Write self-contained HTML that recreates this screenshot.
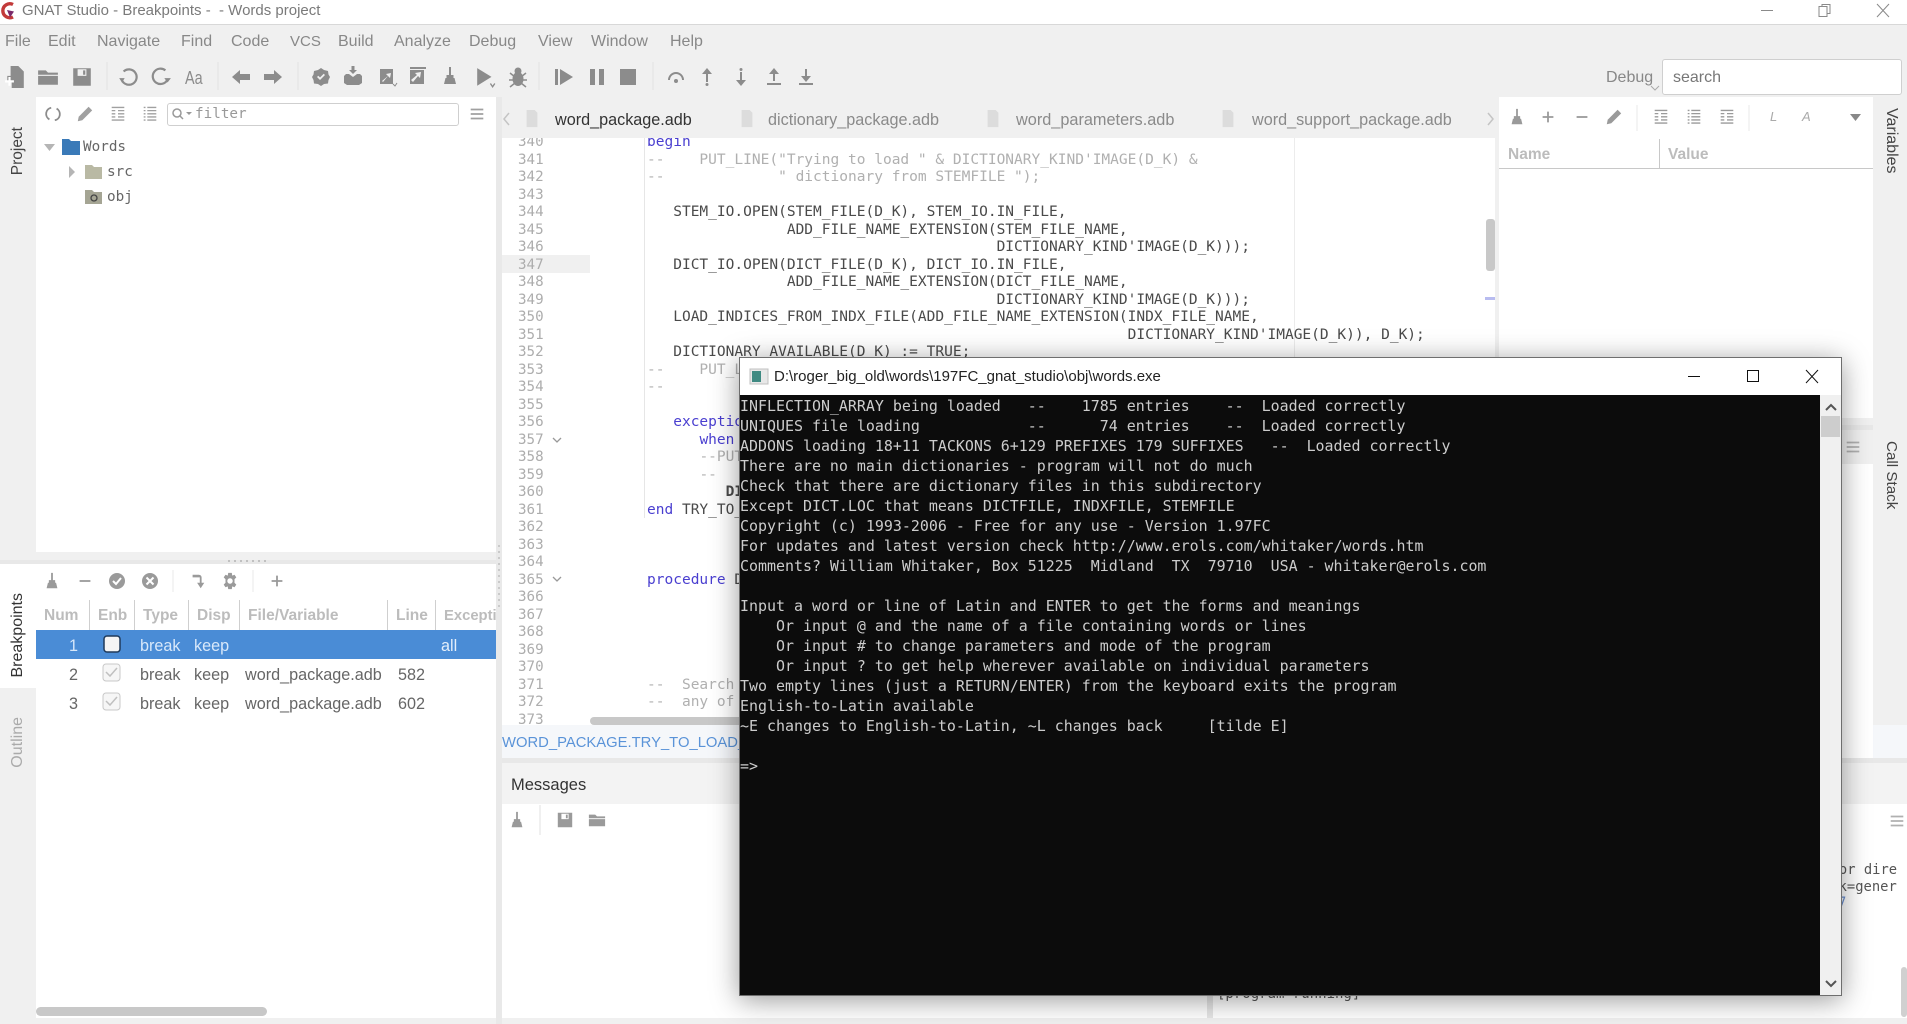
<!DOCTYPE html>
<html><head><meta charset="utf-8"><title>GNAT Studio</title>
<style>
html,body{margin:0;padding:0;width:1907px;height:1024px;overflow:hidden;background:#f0f0f0;font-family:"Liberation Sans",sans-serif}
.r{position:absolute}
.t{position:absolute;white-space:pre;font-size:16px;line-height:20px;color:#777}
.m{color:#888}
.h{font-weight:bold;color:#bcbcbc;font-size:15.5px}
.d{color:#666;font-size:16.2px}
.v{position:absolute;white-space:pre;font-size:16px;line-height:20px;writing-mode:vertical-rl}
.u{transform:rotate(180deg)}
pre{margin:0;position:absolute;font-family:"DejaVu Sans Mono",monospace;font-size:14.53px;line-height:17.5px;color:#4a4a4a}
.k{color:#4a3fd0}.c{color:#b0b0b0}
.mono{font-family:"DejaVu Sans Mono",monospace;white-space:pre;position:absolute}
#con{position:absolute;left:739px;top:357px;width:1101px;height:637px;background:#fff;border:1px solid #6e6e6e;box-shadow:0 4px 26px rgba(0,0,0,.4);z-index:10}
#con pre{left:0;top:38px;font-size:14.95px;line-height:20px;color:#ccc;z-index:2}
</style></head><body>
<!-- title bar -->
<div class="r" style="left:0;top:0;width:1907px;height:24px;background:#fff;border-bottom:1px solid #d8d8d8"></div>
<svg class="r" style="left:0;top:1px" width="18" height="20" viewBox="0 0 18 20"><path d="M13 3.500A7 7 0 1 0 13 16" fill="none" stroke="#c23a3a" stroke-width="3.400"/><path d="M7 9l7 1.500-4 6z" fill="#7a2a6a"/></svg>
<div class="t" style="left:22px;top:0;font-size:15px;line-height:21px;color:#7a7a7a">GNAT Studio - Breakpoints -  - Words project</div>
<svg class="r" style="left:1755px;top:0" width="152" height="24" fill="none" stroke="#8a8a8a"><path d="M6 10.500h12"/><path d="M64 6.500h8v10h-8zM67 6.500V4.500h8v9h-3" /><path d="M122 4l12 13M134 4l-12 13"/></svg>
<!-- menu -->
<div class="t m" style="left:5px;top:32px">File</div>
<div class="t m" style="left:48px;top:32px">Edit</div>
<div class="t m" style="left:97px;top:32px">Navigate</div>
<div class="t m" style="left:181px;top:32px">Find</div>
<div class="t m" style="left:231px;top:32px">Code</div>
<div class="t m" style="left:290px;top:32px;font-size:15px">VCS</div>
<div class="t m" style="left:338px;top:32px">Build</div>
<div class="t m" style="left:394px;top:32px">Analyze</div>
<div class="t m" style="left:469px;top:32px">Debug</div>
<div class="t m" style="left:538px;top:32px">View</div>
<div class="t m" style="left:591px;top:32px">Window</div>
<div class="t m" style="left:670px;top:32px">Help</div>
<div class="t" style="left:1606px;top:68px;color:#888">Debug</div>
<div class="r" style="left:1662px;top:59px;width:238px;height:34px;background:#fff;border:1px solid #cfcfcf;border-radius:3px"></div>
<div class="t" style="left:1673px;top:68px;color:#777">search</div>
<!-- panels -->
<div class="r" style="left:36px;top:97px;width:460px;height:455px;background:#fff"></div>
<div class="r" style="left:0;top:560px;width:496px;height:4px;background:#e8e8e8"></div>
<div class="r" style="left:36px;top:564px;width:460px;height:454px;background:#fff"></div>
<div class="r" style="left:0;top:564px;width:36px;height:124px;background:#fff"></div>
<div class="r" style="left:496px;top:97px;width:6px;height:927px;background:#e9e9e9"></div>
<div class="r" style="left:167px;top:103px;width:290px;height:21px;background:#fff;border:1px solid #cfcfcf;border-radius:3px"></div>
<!-- editor -->
<div class="r" style="left:502px;top:97px;width:995px;height:41px;background:#f0f0f0"></div>
<div class="r" style="left:502px;top:138px;width:993px;height:587px;background:#fff;overflow:hidden">
 <div class="r" style="left:0;top:117px;width:88px;height:18px;background:#f0f0f0"></div>
 <div class="r" style="left:142px;top:0;width:1px;height:380px;background:#e6e6e6"></div>
 <div class="r" style="left:792px;top:0;width:1px;height:260px;background:#ececec"></div>
 <pre style="left:16px;top:-4px;color:#adadad;font-size:14.2px">340
341
342
343
344
345
346
347
348
349
350
351
352
353
354
355
356
357
358
359
360
361
362
363
364
365
366
367
368
369
370
371
372
373</pre>
 <pre style="left:145px;top:-4px"><span class="k">begin</span>
<span class="c">--    PUT_LINE("Trying to load " &amp; DICTIONARY_KIND'IMAGE(D_K) &amp;</span>
<span class="c">--             " dictionary from STEMFILE ");</span>

   STEM_IO.OPEN(STEM_FILE(D_K), STEM_IO.IN_FILE,
                ADD_FILE_NAME_EXTENSION(STEM_FILE_NAME,
                                        DICTIONARY_KIND'IMAGE(D_K)));
   DICT_IO.OPEN(DICT_FILE(D_K), DICT_IO.IN_FILE,
                ADD_FILE_NAME_EXTENSION(DICT_FILE_NAME,
                                        DICTIONARY_KIND'IMAGE(D_K)));
   LOAD_INDICES_FROM_INDX_FILE(ADD_FILE_NAME_EXTENSION(INDX_FILE_NAME,
                                                       DICTIONARY_KIND'IMAGE(D_K)), D_K);
   DICTIONARY_AVAILABLE(D_K) := TRUE;
<span class="c">--    PUT_LINE("Done");</span>
<span class="c">--</span>

   <span class="k">exception</span>
      <span class="k">when</span> others
      <span class="c">--PUT</span>
      <span class="c">--</span>
         <b>DICT</b>
<span class="k">end</span> TRY_TO_LOAD;



<span class="k">procedure</span> DICTIONARY





<span class="c">--  Search</span>
<span class="c">--  any of</span></pre>
</div>
<div class="r" style="left:590px;top:717px;width:160px;height:8px;background:#c8c8c8;border-radius:4px"></div>
<div class="r" style="left:1486px;top:219px;width:9px;height:52px;background:#c8c8c8;border-radius:3px"></div>
<div class="r" style="left:1485px;top:297px;width:10px;height:3px;background:#b8bcf0"></div>
<div class="t" style="left:555px;top:110px;color:#333;font-size:16.2px">word_package.adb</div>
<div class="t" style="left:768px;top:110px;color:#8a8a8a;font-size:16.2px">dictionary_package.adb</div>
<div class="t" style="left:1016px;top:110px;color:#8a8a8a;font-size:16.3px">word_parameters.adb</div>
<div class="t" style="left:1252px;top:110px;color:#8a8a8a;font-size:16.2px">word_support_package.adb</div>
<!-- breadcrumb / messages -->
<div class="r" style="left:502px;top:725px;width:1405px;height:33px;background:#f5f7fa"></div>
<div class="r" style="left:502px;top:758px;width:1405px;height:5px;background:#e8e8e8"></div>
<div class="t" style="left:502px;top:733px;color:#5a93d8;font-size:14.8px">WORD_PACKAGE.TRY_TO_LOAD_</div>
<div class="r" style="left:502px;top:763px;width:1405px;height:41px;background:#f3f3f3"></div>
<div class="r" style="left:502px;top:804px;width:705px;height:214px;background:#fff"></div>
<div class="r" style="left:1207px;top:804px;width:6px;height:214px;background:#e6e6e6"></div>
<div class="r" style="left:1213px;top:804px;width:694px;height:214px;background:#fff"></div>
<div class="t" style="left:511px;top:775px;color:#333;font-size:16.5px">Messages</div>
<div class="mono" style="left:1217px;top:985px;font-size:14px;line-height:18px;color:#555">[program running]</div>
<div class="mono" style="left:1814px;top:861px;font-size:13.8px;line-height:18px;color:#555">  for dire</div>
<div class="mono" style="left:1822px;top:878px;font-size:13.8px;line-height:18px;color:#555">  k=gener</div>
<div class="mono" style="left:1838px;top:894px;font-size:13.8px;line-height:18px;color:#6a8fd0">7</div>
<div class="r" style="left:1901px;top:967px;width:6px;height:50px;background:#d0d0d0;border-radius:3px"></div>
<!-- right panels -->
<div class="r" style="left:1499px;top:97px;width:374px;height:321px;background:#fff"></div>
<div class="r" style="left:1499px;top:425px;width:374px;height:5px;background:#e8e8e8"></div>
<div class="r" style="left:1499px;top:431px;width:374px;height:327px;background:#fff"></div>
<div class="r" style="left:1499px;top:431px;width:374px;height:33px;background:#f0f0f0"></div>
<div class="r" style="left:1499px;top:168px;width:374px;height:1px;background:#c8c8c8"></div>
<div class="r" style="left:1659px;top:139px;width:1px;height:29px;background:#c8c8c8"></div>
<div class="t h" style="left:1508px;top:145px">Name</div>
<div class="t h" style="left:1668px;top:145px">Value</div>
<div class="t" style="left:1770px;top:107px;font-style:italic;font-size:13px;color:#aaa">L</div>
<div class="t" style="left:1802px;top:107px;font-style:italic;font-size:13px;color:#aaa">A</div>
<!-- bottom left table -->
<div class="r" style="left:36px;top:630px;width:460px;height:29px;background:#4a8cd6"></div>
<div class="r" style="left:36px;top:1007px;width:231px;height:9px;background:#c8c8c8;border-radius:5px"></div>
<div class="r" style="left:89px;top:600px;width:1px;height:30px;background:#cfcfcf"></div>
<div class="r" style="left:134px;top:600px;width:1px;height:30px;background:#cfcfcf"></div>
<div class="r" style="left:188px;top:600px;width:1px;height:30px;background:#cfcfcf"></div>
<div class="r" style="left:239px;top:600px;width:1px;height:30px;background:#cfcfcf"></div>
<div class="r" style="left:387px;top:600px;width:1px;height:30px;background:#cfcfcf"></div>
<div class="r" style="left:435px;top:600px;width:1px;height:30px;background:#cfcfcf"></div>
<div class="r" style="left:36px;top:600px;width:460px;height:30px;overflow:hidden">
<div class="t h" style="left:8px;top:6px">Num</div>
<div class="t h" style="left:62px;top:6px">Enb</div>
<div class="t h" style="left:107px;top:6px">Type</div>
<div class="t h" style="left:161px;top:6px">Disp</div>
<div class="t h" style="left:212px;top:6px">File/Variable</div>
<div class="t h" style="left:360px;top:6px">Line</div>
<div class="t h" style="left:408px;top:6px;font-size:14.8px">Exception</div>
</div>
<div class="t d" style="left:69px;top:636px;color:#d8e8fa">1</div>
<div class="t d" style="left:140px;top:636px;color:#d8e8fa">break</div>
<div class="t d" style="left:194px;top:636px;color:#d8e8fa">keep</div>
<div class="t d" style="left:441px;top:636px;color:#e4effb">all</div>
<div class="t d" style="left:69px;top:665px">2</div>
<div class="t d" style="left:140px;top:665px">break</div>
<div class="t d" style="left:194px;top:665px">keep</div>
<div class="t d" style="left:245px;top:665px">word_package.adb</div>
<div class="t d" style="left:398px;top:665px">582</div>
<div class="t d" style="left:69px;top:694px">3</div>
<div class="t d" style="left:140px;top:694px">break</div>
<div class="t d" style="left:194px;top:694px">keep</div>
<div class="t d" style="left:245px;top:694px">word_package.adb</div>
<div class="t d" style="left:398px;top:694px">602</div>
<!-- tree -->
<div class="mono" style="left:83px;top:137px;font-size:14.3px;line-height:20px;color:#666">Words</div>
<div class="mono" style="left:107px;top:162px;font-size:14.3px;line-height:20px;color:#666">src</div>
<div class="mono" style="left:107px;top:187px;font-size:14.3px;line-height:20px;color:#666">obj</div>
<div class="mono" style="left:195px;top:104px;font-size:14.3px;line-height:20px;color:#999">filter</div>
<div class="t" style="left:185px;top:68px;font-size:18px;color:#8c8c8c;transform:scaleX(.8);transform-origin:0 0">Aa</div>
<!-- vertical tabs -->
<div class="v u" style="left:8px;top:127px;color:#444;font-size:15.5px">Project</div>
<div class="v u" style="left:8px;top:593px;color:#333">Breakpoints</div>
<div class="v u" style="left:8px;top:717px;color:#aaa">Outline</div>
<div class="v" style="left:1881px;top:108px;color:#444">Variables</div>
<div class="v" style="left:1881px;top:441px;color:#444;font-size:15.2px">Call Stack</div>
<!-- icons -->
<svg class="r" style="left:0;top:0" width="1907" height="1024" fill="#8c8c8c">
<defs>
<symbol id="broom" viewBox="0 0 20 20"><path d="M9 1h2v8h-2zM6.500 9h7v3h-7zM5.500 12h9l1.500 6H4z"/></symbol>
<symbol id="folder" viewBox="0 0 20 20"><path d="M1 4h7l2 2h9v2H1zM1 9h18v8H1z"/></symbol>
<symbol id="save" viewBox="0 0 20 20"><path fill-rule="evenodd" d="M2 2h16v16H2zM6 3v6h8V3zM11 4h2v4h-2z"/></symbol>
<symbol id="undo" viewBox="0 0 20 20"><path d="M6 5a7 7 0 1 1-1.500 8" fill="none" stroke="#8c8c8c" stroke-width="2"/><path d="M2 11l5 0-2.500 4z"/></symbol>
<symbol id="redo" viewBox="0 0 20 20"><path d="M14 4a7 7 0 1 0 1.500 9" fill="none" stroke="#8c8c8c" stroke-width="2"/><path d="M13 11l6 0-3 4z"/></symbol>
<symbol id="left" viewBox="0 0 20 20"><path d="M1 10l8-7v4h10v6H9v4z"/></symbol>
<symbol id="right" viewBox="0 0 20 20"><path d="M19 10l-8-7v4H1v6h10v4z"/></symbol>
<symbol id="badge" viewBox="0 0 20 20"><path fill-rule="evenodd" d="M10 1l3 2 4 1 .5 3.500L19 10l-1.500 3-.5 3.500-4 .5-3 2-3-2-4-.5-.5-3.500L1 10l1.500-2.500L3 4l4-1zM6 10l3 3 5-5-1.300-1.200L9 10.500 7.300 8.800z"/></symbol>
<symbol id="box" viewBox="0 0 20 20"><path d="M8.500 0h3v4h2.500L10 8 6 4h2.500zM3 8h3l4 3 4-3h3l2 2v7l-3 2H4l-3-2v-7z"/></symbol>
<symbol id="build" viewBox="0 0 20 20"><path fill-rule="evenodd" d="M2 2h13v15H2zM5 15l5-6 2 2 1-5-5 1 2 2-6 5z"/><path d="M15 17l2 2 2-3" fill="none" stroke="#8c8c8c"/></symbol>
<symbol id="doc" viewBox="0 0 20 20"><path fill-rule="evenodd" d="M2 1h16v2H2zM2 4h14v14H2zM5 16l5-6 2 2 1-6-6 1 2 2-6 5z"/></symbol>
<symbol id="play" viewBox="0 0 20 20"><path d="M2 1l13 8-13 8z"/><path d="M14 15l2 3 2-3" fill="none" stroke="#8c8c8c" stroke-width="1.200"/></symbol>
<symbol id="bug" viewBox="0 0 24 24"><circle cx="12" cy="6" r="3.500"/><ellipse cx="12" cy="14" rx="5.500" ry="7"/><path d="M4 8l5 4M20 8l-5 4M3 15h5M21 15h-5M4 22l5-4M20 22l-5-4" stroke="#8c8c8c" stroke-width="1.500"/></symbol>
<symbol id="barplay" viewBox="0 0 20 20"><path d="M1 2h3v16H1zM6 2l13 8-13 8z"/></symbol>
<symbol id="pause" viewBox="0 0 20 20"><path d="M3 2h5v16H3zM12 2h5v16h-5z"/></symbol>
<symbol id="stop" viewBox="0 0 20 20"><path d="M2 2h16v16H2z"/></symbol>
<symbol id="over" viewBox="0 0 20 20"><path d="M3 13a7 7 0 0 1 14 0" fill="none" stroke="#8c8c8c" stroke-width="2"/><circle cx="10" cy="14" r="2"/></symbol>
<symbol id="up" viewBox="0 0 20 20"><path d="M10 1l5 6h-4v8H9V7H5z"/><circle cx="10" cy="17.500" r="1.500"/></symbol>
<symbol id="down" viewBox="0 0 20 20"><path d="M10 19l5-6h-4V5H9v8H5z"/><circle cx="10" cy="2.500" r="1.500"/></symbol>
<symbol id="upb" viewBox="0 0 20 20"><path d="M10 1l5 6h-4v7H9V7H5zM3 16h14v2H3z"/></symbol>
<symbol id="downb" viewBox="0 0 20 20"><path d="M10 15l5-6h-4V2H9v7H5zM3 16h14v2H3z"/></symbol>
<symbol id="newf" viewBox="0 0 20 20"><path d="M6 0h7l5 5v15H7v-5H3V9h3z"/><path d="M1 13h8v2H1zM4 10h2v8H4z" fill="#fff"/></symbol>
<symbol id="sync" viewBox="0 0 20 20"><path d="M8 3a7 7 0 0 0-2 13M12 17a7 7 0 0 0 2-13" fill="none" stroke="#8c8c8c" stroke-width="2"/></symbol>
<symbol id="pen" viewBox="0 0 20 20"><path d="M14 2l4 4L7 17l-5 1 1-5z"/></symbol>
<symbol id="list1" viewBox="0 0 20 20"><path d="M3 2h14v1.500H3zM3 5.500h4V7H3zM10 5.500h7V7h-7zM3 9h4v1.500H3zM10 9h7v1.500h-7zM3 12.500h4V14H3zM10 12.500h7V14h-7zM3 16h14v1.500H3z"/></symbol>
<symbol id="list2" viewBox="0 0 20 20"><path d="M3 2h2v1.500H3zM7 2h10v1.500H7zM3 5.500h2V7H3zM7 5.500h10V7H7zM3 9h2v1.500H3zM7 9h10v1.500H7zM3 12.500h2V14H3zM7 12.500h10V14H7zM3 16h2v1.500H3zM7 16h10v1.500H7z"/></symbol>
<symbol id="ham" viewBox="0 0 20 20"><path d="M3 4h14v2H3zM3 9h14v2H3zM3 14h14v2H3z"/></symbol>
<symbol id="chk" viewBox="0 0 20 20"><circle cx="10" cy="10" r="8"/><path d="M6 10l3 3 5-6" fill="none" stroke="#fff" stroke-width="2"/></symbol>
<symbol id="xc" viewBox="0 0 20 20"><circle cx="10" cy="10" r="8"/><path d="M6.500 6.500l7 7M13.500 6.500l-7 7" fill="none" stroke="#fff" stroke-width="2"/></symbol>
<symbol id="gear" viewBox="0 0 20 20"><path fill-rule="evenodd" d="M8 1h4l.5 3 2.500-1 2 3-2 2v4l2 2-2 3-2.500-1-.5 3H8l-.5-3-2.500 1-2-3 2-2V8L3 6l2-3 2.500 1zM10 7a3 3 0 1 0 .01 0z"/></symbol>
<symbol id="step" viewBox="0 0 20 20"><path d="M4 3h7a3 3 0 0 1 3 3v6h3l-4 6-4-6h3V6H4z"/></symbol>
<symbol id="plus" viewBox="0 0 20 20"><path d="M9 4h2v5h5v2h-5v5H9v-5H4V9h5z"/></symbol>
<symbol id="minus" viewBox="0 0 20 20"><path d="M4 9h12v2H4z"/></symbol>
<symbol id="page" viewBox="0 0 20 20"><path d="M4 0h9l3 3v16H4z" fill="#dcdcdc"/></symbol>
</defs>
<!-- main toolbar -->
<use href="#newf" x="4" y="66" width="22" height="22"/><use href="#folder" x="37" y="66" width="22" height="22"/><use href="#save" x="71" y="66" width="22" height="22"/>
<use href="#undo" x="117" y="66" width="22" height="22"/><use href="#redo" x="150" y="66" width="22" height="22"/>
<use href="#left" x="231" y="67" width="20" height="20"/><use href="#right" x="263" y="67" width="20" height="20"/>
<use href="#badge" x="311" y="67" width="20" height="20"/><use href="#box" x="343" y="66" width="20" height="20"/><use href="#build" x="378" y="67" width="20" height="20"/><use href="#doc" x="408" y="66" width="20" height="20"/><use href="#broom" x="440" y="66" width="20" height="20"/>
<use href="#play" x="475" y="67" width="22" height="22"/><use href="#bug" x="506" y="65" width="24" height="24"/>
<use href="#barplay" x="554" y="67" width="20" height="20"/><use href="#pause" x="587" y="67" width="20" height="20"/><use href="#stop" x="618" y="67" width="20" height="20"/>
<use href="#over" x="666" y="67" width="20" height="20"/><use href="#up" x="697" y="67" width="20" height="20"/><use href="#down" x="731" y="67" width="20" height="20"/><use href="#upb" x="764" y="67" width="20" height="20"/><use href="#downb" x="796" y="67" width="20" height="20"/>
<path d="M107 62v28M218 62v28M298 62v28M539 62v28M653 62v28M540 805v30" stroke="#e2e2e2"/>
<path d="M1651 86l4 4 4-4" fill="none" stroke="#aaa"/>
<!-- project toolbar -->
<g fill="#a0a0a0"><use href="#sync" x="44" y="105" width="18" height="18"/><use href="#pen" x="76" y="105" width="18" height="18"/><use href="#list1" x="109" y="105" width="18" height="18"/><use href="#list2" x="141" y="105" width="18" height="18"/><use href="#ham" x="468" y="105" width="18" height="18"/></g>
<circle cx="177" cy="113" r="4" fill="none" stroke="#999" stroke-width="1.500"/><path d="M180 116l3 3" stroke="#999" stroke-width="1.500"/><path d="M186 112h6l-3 3z" fill="#999"/>
<path d="M44 144h11l-5.500 7z" fill="#b5b5b5"/><path d="M69 166v12l6-6z" fill="#b5b5b5"/>
<path d="M62 139h7l2 2h9v14H62z" fill="#3a7ab8"/>
<path d="M85 165h7l2 2h8v12H85z" fill="#b9b9a4"/><path d="M85 190h7l2 2h8v12H85z" fill="#a5a594"/>
<circle cx="94" cy="198" r="3" fill="none" stroke="#444" stroke-width="1.300"/>
<!-- tab files -->
<use href="#page" x="522" y="110" width="20" height="18"/><use href="#page" x="737" y="110" width="20" height="18"/><use href="#page" x="983" y="110" width="20" height="18"/><use href="#page" x="1218" y="110" width="20" height="18"/>
<path d="M509 113l-5 6 5 6M1488 113l5 6-5 6" fill="none" stroke="#c4c4c4" stroke-width="1.500"/>
<path d="M553 438l4 4 4-4M553 577l4 4 4-4" fill="none" stroke="#999" stroke-width="1.300"/>
<!-- variables toolbar -->
<g fill="#9a9a9a"><use href="#broom" x="1508" y="108" width="18" height="18"/><use href="#plus" x="1539" y="108" width="18" height="18"/><use href="#minus" x="1573" y="108" width="18" height="18"/><use href="#pen" x="1605" y="108" width="18" height="18"/><use href="#list1" x="1652" y="108" width="18" height="18"/><use href="#list2" x="1685" y="108" width="18" height="18"/><use href="#list1" x="1718" y="108" width="18" height="18"/></g>
<path d="M1637 105v26M1749 105v26" stroke="#e8e8e8"/>
<path d="M1850 114h11l-5.500 7z" fill="#888"/>
<use href="#ham" x="1844" y="438" width="18" height="18" fill="#b0b0b0"/>
<use href="#ham" x="1888" y="812" width="18" height="18" fill="#b0b0b0"/>
<!-- breakpoints toolbar -->
<g fill="#9a9a9a"><use href="#broom" x="43" y="572" width="18" height="18"/><use href="#minus" x="76" y="572" width="18" height="18"/><use href="#chk" x="107" y="571" width="20" height="20"/><use href="#xc" x="140" y="571" width="20" height="20"/><use href="#step" x="189" y="572" width="18" height="18"/><use href="#gear" x="221" y="572" width="18" height="18"/><use href="#plus" x="268" y="572" width="18" height="18"/></g>
<path d="M173 570v22M253 570v22" stroke="#e8e8e8"/>
<rect x="104" y="636" width="16" height="16" rx="3" fill="#f4f4f4" stroke="#1f3a5a" stroke-width="1.500"/>
<rect x="103" y="664" width="17" height="17" rx="3" fill="#f6f6f6" stroke="#c8c8c8"/><path d="M106 672l4 4 7-8" fill="none" stroke="#c0c0c0" stroke-width="1.500"/>
<rect x="103" y="693" width="17" height="17" rx="3" fill="#f6f6f6" stroke="#c8c8c8"/><path d="M106 701l4 4 7-8" fill="none" stroke="#c0c0c0" stroke-width="1.500"/>
<!-- messages toolbar -->
<g fill="#9a9a9a"><use href="#broom" x="508" y="811" width="18" height="18"/><use href="#save" x="556" y="811" width="18" height="18"/><use href="#folder" x="588" y="811" width="18" height="18"/></g>
<!-- grips -->
<path d="M228 561h40" stroke="#999" stroke-dasharray="2 4"/>
<path d="M499 545v66" stroke="#aaa" stroke-dasharray="2 4"/>
</svg>
<!-- console -->
<div id="con">
<div class="r" style="left:0;top:37px;width:1080px;height:600px;background:#0c0c0c"></div>
<div class="r" style="left:1080px;top:37px;width:21px;height:600px;background:#f0f0f0"></div>
<div class="r" style="left:1081px;top:58px;width:19px;height:21px;background:#cdcdcd"></div>
<svg class="r" style="left:0;top:0" width="1101" height="637" fill="none">
<rect x="10" y="11" width="18" height="15" fill="#e8e8e8" stroke="#c0c0c0"/><rect x="12" y="13" width="9" height="11" fill="#3f8a82"/>
<path d="M948 18.500h12M1007.500 12.500h11v11h-11zM1066 12l12 13M1078 12l-12 13" stroke="#111" stroke-width="1"/>
<path d="M1086 52l5-5 5 5M1086 623l5 5 5-5" stroke="#555" stroke-width="2"/>
</svg>
<div class="t" style="left:34px;top:9px;font-size:15px;color:#222">D:\roger_big_old\words\197FC_gnat_studio\obj\words.exe</div>
<pre>INFLECTION_ARRAY being loaded   --    1785 entries    --  Loaded correctly
UNIQUES file loading            --      74 entries    --  Loaded correctly
ADDONS loading 18+11 TACKONS 6+129 PREFIXES 179 SUFFIXES   --  Loaded correctly
There are no main dictionaries - program will not do much
Check that there are dictionary files in this subdirectory
Except DICT.LOC that means DICTFILE, INDXFILE, STEMFILE
Copyright (c) 1993-2006 - Free for any use - Version 1.97FC
For updates and latest version check http://www.erols.com/whitaker/words.htm
Comments? William Whitaker, Box 51225  Midland  TX  79710  USA - whitaker@erols.com

Input a word or line of Latin and ENTER to get the forms and meanings
    Or input @ and the name of a file containing words or lines
    Or input # to change parameters and mode of the program
    Or input ? to get help wherever available on individual parameters
Two empty lines (just a RETURN/ENTER) from the keyboard exits the program
English-to-Latin available
~E changes to English-to-Latin, ~L changes back     [tilde E]

=&gt;</pre>
</div>
</body></html>
